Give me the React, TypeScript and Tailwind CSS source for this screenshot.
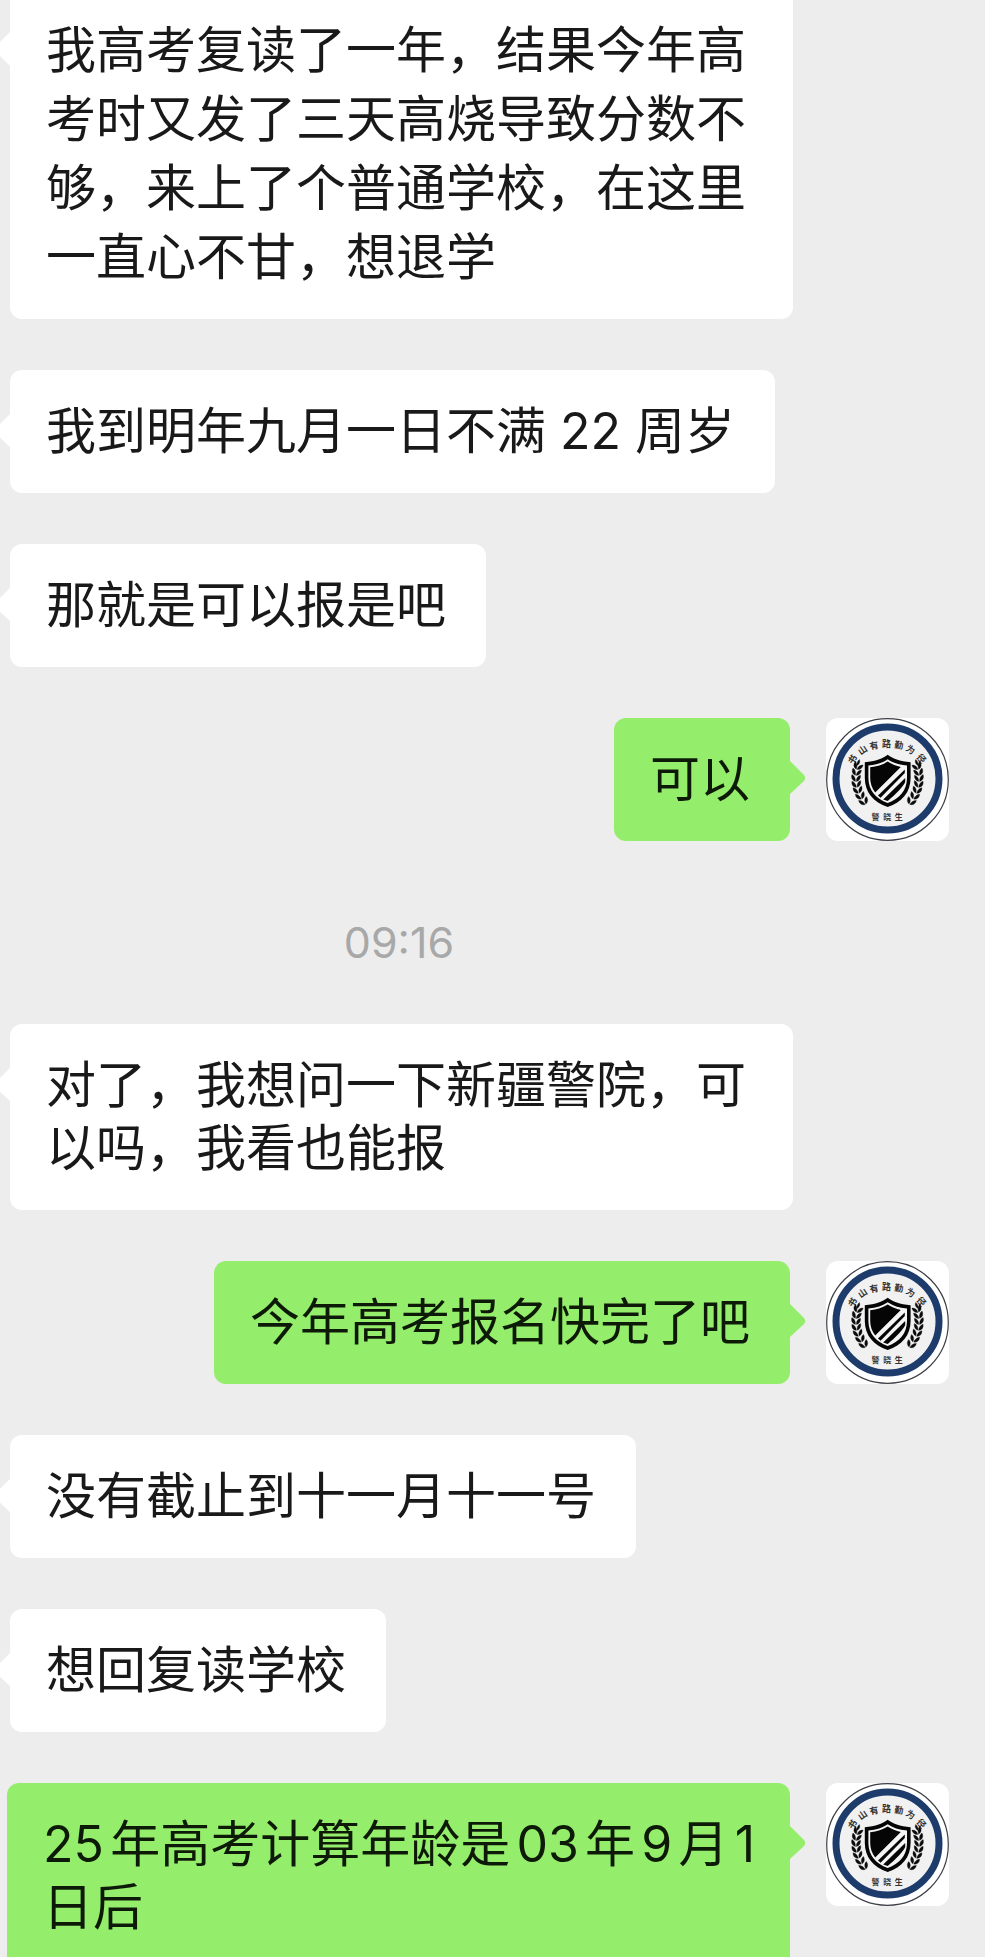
import React from "react";

type Message =
  | { kind: "in" | "out"; text: string; clip?: "top" | "bottom" }
  | { kind: "time"; text: string };

const messages: Message[] = [
  {
    kind: "in",
    text: "我高考复读了一年，结果今年高考时又发了三天高烧导致分数不够，来上了个普通学校，在这里一直心不甘，想退学",
    clip: "top",
  },
  { kind: "in", text: "我到明年九月一日不满 22 周岁" },
  { kind: "in", text: "那就是可以报是吧" },
  { kind: "out", text: "可以" },
  { kind: "time", text: "09:16" },
  { kind: "in", text: "对了，我想问一下新疆警院，可以吗，我看也能报" },
  { kind: "out", text: "今年高考报名快完了吧" },
  { kind: "in", text: "没有截止到十一月十一号" },
  { kind: "in", text: "想回复读学校" },
  { kind: "out", text: "25年高考计算年龄是03年9月1日后", clip: "bottom" },
];

const motto = [
  { c: "书", x: 26.5, y: 41.5, r: -58 },
  { c: "山", x: 36.5, y: 32, r: -35 },
  { c: "有", x: 48, y: 27.5, r: -12 },
  { c: "路", x: 60.5, y: 26, r: 0 },
  { c: "勤", x: 73, y: 27, r: 8 },
  { c: "为", x: 84.5, y: 31.5, r: 32 },
  { c: "径", x: 95.5, y: 40.5, r: 50 },
];

const leaves = [
  { x: 31.5, y: 48, r: 20 },
  { x: 30, y: 54, r: 10 },
  { x: 29.5, y: 60, r: 0 },
  { x: 30, y: 66, r: -8 },
  { x: 31.5, y: 72, r: -16 },
  { x: 34, y: 78, r: -24 },
  { x: 37.5, y: 83.5, r: -32 },
];

function Laurel() {
  return (
    <g fill="#0b0b0b" stroke="#0b0b0b" strokeWidth="0.3">
      {leaves.map((l) => (
        <g key={l.y} transform={`translate(${l.x} ${l.y}) rotate(${l.r})`}>
          <path d="M0 3.4C-3.6 2.6-4.6-.4-3.6-3.4-1.6-2.6 0-.2 0 3.4Z" />
          <path d="M.8 3.4C.6.2 2.2-2 5-2.8 5.4.2 3.8 2.8.8 3.4Z" />
        </g>
      ))}
      <path d="M31 47.5c-.4-2 .4-4.4 2.4-6 1 2.2.2 4.6-2.4 6Z" />
    </g>
  );
}

function Avatar() {
  return (
    <svg
      viewBox="0 0 123 123"
      role="img"
      aria-label="警晓生"
      className="size-[123px] shrink-0 rounded-xl bg-white"
    >
      <circle cx="61.5" cy="61.5" r="60.8" fill="#fff" stroke="#3c3f46" strokeWidth="1.2" />
      <circle cx="61.5" cy="60.5" r="51.5" fill="#f1f1f2" stroke="#1d3b6b" strokeWidth="7" />
      <g
        fill="#333"
        fontSize="9"
        fontWeight="700"
        textAnchor="middle"
        fontFamily="'Noto Sans CJK SC', sans-serif"
      >
        {motto.map((m) => (
          <text key={m.c} transform={`translate(${m.x} ${m.y}) rotate(${m.r})`} y="3.3">
            {m.c}
          </text>
        ))}
        <text x="49.5" y="102" fontSize="8">警</text>
        <text x="61.2" y="102" fontSize="8">晓</text>
        <text x="72.8" y="102" fontSize="8">生</text>
      </g>
      <Laurel />
      <g transform="translate(123 0) scale(-1 1)">
        <Laurel />
      </g>
      <path
        fill="#050505"
        d="M61.7 36.8C66 40.4 74 43.6 84.6 44.2V60C84.6 74 76 84.5 61.7 89 47.4 84.5 38.8 74 38.8 60V44.2C49.4 43.6 57.4 40.4 61.7 36.8Z"
      />
      <path
        fill="#f4f4f4"
        d="M61.7 41.2C66.5 44.6 73 46.9 81 47.6V60C81 72 73.5 81 61.7 85 49.9 81 42.4 72 42.4 60V47.6C50.4 46.9 56.9 44.6 61.7 41.2Z"
      />
      <path
        fill="#050505"
        d="M61.7 43.6C65.5 46.1 70 47.9 74.8 48.9L49.2 74.5C45.8 70 44.2 65 44.2 60V49.3C51 48.5 57 46.7 61.7 43.6Z"
      />
      <path fill="#050505" d="M78.8 51.5V55L54.6 79.8 52 77.6Z" />
      <path fill="#050505" d="M79.2 60V64C77.5 68 70 76 61.7 83L57.2 81.4Z" />
    </svg>
  );
}

function Tail({ side }: { side: "left" | "right" }) {
  return (
    <svg
      aria-hidden="true"
      viewBox="0 0 16 36"
      className={
        side === "right"
          ? "absolute left-full top-[42px] h-9 w-4 text-[#95ee6b]"
          : "absolute right-full top-[43px] h-9 w-4 -scale-x-100 text-white"
      }
    >
      <path fill="currentColor" d="M0 1 13.5 14.5Q17 18 13.5 21.5L0 34Z" />
    </svg>
  );
}

function Bubble({ message }: { message: Extract<Message, { clip?: string }> }) {
  const incoming = message.kind === "in";
  const shape =
    message.clip === "top"
      ? "rounded-b-xl pt-4 pb-[27px] leading-[69px]"
      : message.clip === "bottom"
        ? "rounded-t-xl pt-[30px] pb-[18px] leading-[63px]"
        : "rounded-xl py-[30px] leading-[63px]";
  const tone = incoming ? "bg-white text-[#191919]" : "bg-[#95ee6b] text-[#0d1a08]";
  // Bubbles that wrap to several lines use a tighter right edge.
  const edge = message.text.length > 16 ? "pr-8" : "pr-10";
  return (
    <div className={`relative max-w-[783px] pl-9 text-[50px] [text-autospace:normal] ${edge} ${shape} ${tone}`}>
      {message.clip === "top" ? (
        <span className="absolute right-full top-0 flex h-[85px] w-4 items-end overflow-hidden">
          <svg aria-hidden="true" viewBox="0 0 16 72" className="h-[72px] w-4 -scale-x-100 text-white">
            <path fill="currentColor" d="M0 19 13.5 32.5Q17 36 13.5 39.5L0 53Z" />
          </svg>
        </span>
      ) : (
        <Tail side={incoming ? "left" : "right"} />
      )}
      <p>{message.text}</p>
    </div>
  );
}

export default function App() {
  return (
    <main
      lang="zh-CN"
      className="flex min-h-screen w-full flex-col gap-[51px] overflow-hidden bg-[#ededed] font-[Inter,'Noto_Sans_CJK_SC',sans-serif]"
    >
      {messages.map((m, i) => {
        if (m.kind === "time") {
          return (
            <time key={i} className="block pt-5 pr-[187px] text-center text-[43px] leading-[61px] text-[#a8a8a8]">
              {m.text}
            </time>
          );
        }
        return m.kind === "in" ? (
          <div key={i} className="flex justify-start pl-2.5">
            <Bubble message={m} />
          </div>
        ) : (
          <div key={i} className="flex items-start justify-end gap-9 pr-9">
            <Bubble message={m} />
            <Avatar />
          </div>
        );
      })}
    </main>
  );
}
